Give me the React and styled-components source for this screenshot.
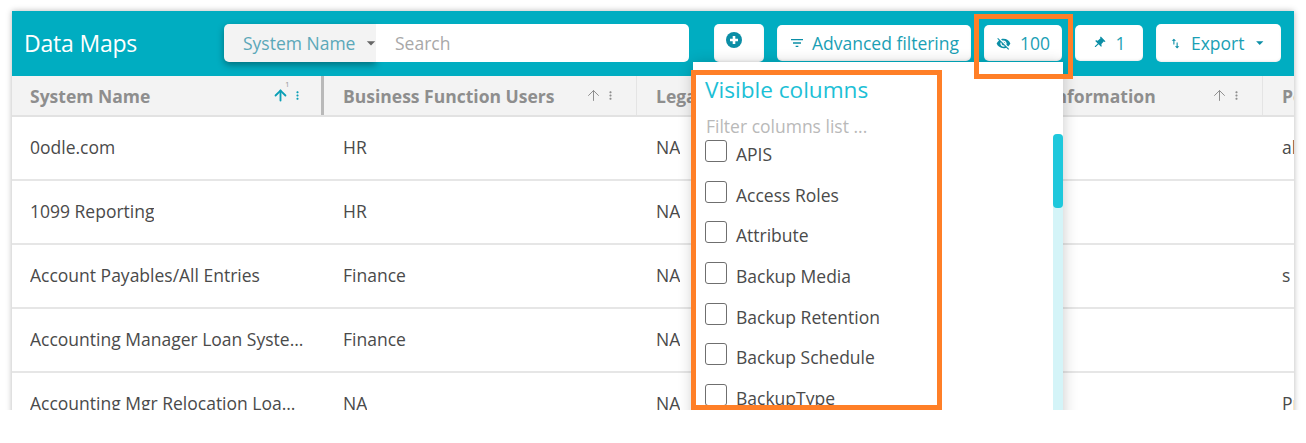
import React from 'react';
import styled, { createGlobalStyle } from 'styled-components';
import { ArrowUp } from 'lucide-react';
import {
  MdArrowDropDown,
  MdFilterList,
  MdMoreVert,
  MdPushPin,
  MdSwapVert,
  MdVisibilityOff,
} from 'react-icons/md';

const GlobalStyle = createGlobalStyle`
  html, body {
    margin: 0;
    padding: 0;
    background: #fff;
    font-family: "Open Sans", "Liberation Sans", sans-serif;
  }
`;

const Page = styled.div`
  position: relative;
  width: 1306px;
  height: 410px;
  padding: 11px 12px 0;
  box-sizing: border-box;
  overflow: hidden;
`;

const Card = styled.div`
  position: relative;
  width: 1282px;
  height: 440px;
  overflow: hidden;
  background: #fff;
  box-shadow: 0 0 6px rgba(0, 0, 0, 0.28);
`;

const Header = styled.header`
  display: flex;
  align-items: flex-start;
  height: 65px;
  padding: 13px 0 0 12px;
  box-sizing: border-box;
  background: #00adc1;
`;

const Title = styled.h1`
  width: 200px;
  margin: 0;
  font-size: 23px;
  line-height: 38px;
  font-weight: 400;
  letter-spacing: -0.2px;
  color: #fff;
`;

const Search = styled.div`
  display: flex;
  width: 465px;
  height: 38px;
  margin-right: 25px;
`;

const SearchScope = styled.div`
  display: flex;
  align-items: center;
  width: 152px;
  padding-left: 19px;
  box-sizing: border-box;
  background: #f3f3f3;
  border-radius: 5px 0 0 5px;
  box-shadow: 0 3px 7px rgba(0, 0, 0, 0.35);
  font-size: 17.5px;
  color: #5ba8b9;
  white-space: nowrap;

  svg {
    flex: none;
    margin-left: 6px;
    color: #666;
    font-size: 20px;
  }
`;

const SearchInput = styled.input`
  flex: 1;
  min-width: 0;
  position: relative;
  border: 0;
  outline: 0;
  padding: 0 0 0 19px;
  background: #fff;
  border-radius: 0 5px 5px 0;
  font: 400 17.5px "Open Sans", sans-serif;

  &::placeholder {
    color: #a8a8a8;
    opacity: 1;
  }
`;

const Toolbar = styled.div`
  display: flex;
  align-items: flex-start;
  gap: 13px;
`;

const ToolButton = styled.button`
  display: flex;
  align-items: center;
  justify-content: ${(p) => (p.$top ? 'flex-start' : 'center')};
  width: ${(p) => p.$width}px;
  height: ${(p) => (p.$tall ? 38 : 36)}px;
  margin-top: ${(p) => (p.$tall ? 0 : 1)}px;
  padding: 0;
  border: 0;
  border-radius: 5px;
  background: #fff;
  box-shadow: inset 0 -1px 2px rgba(0, 0, 0, 0.08);
  font: 400 17.5px "Open Sans", sans-serif;
  color: #1b9fb5;
`;

const ButtonIcon = styled.span`
  display: inline-flex;
  margin-right: ${(p) => p.$gap}px;
  font-size: ${(p) => p.$size}px;
  color: #0b8ea6;
  transform: ${(p) => p.$rotate || 'none'};
`;

const DropCaret = styled(MdArrowDropDown)`
  margin-left: 6px;
  color: #0b8ea6;
`;

const PlusIcon = styled.svg`
  width: 16px;
  height: 16px;
  margin: -6px 0 0 12px;
`;

const TableHead = styled.div`
  display: grid;
  grid-template-columns: 312px repeat(4, 313px);
  height: 41px;
  background: #f3f3f3;
  border-bottom: 2px solid #e2e2e2;
  box-sizing: border-box;
`;

const HeadCell = styled.div`
  display: flex;
  align-items: center;
  justify-content: space-between;
  height: 39px;
  padding: 0 ${(p) => (p.$frozen ? 17 : 19)}px 0 ${(p) => (p.$frozen ? 18 : 19)}px;
  box-sizing: border-box;
  border-right: ${(p) => (p.$frozen ? '3px solid #b9b9b9' : '1px solid #e4e4e4')};
  font-size: 17.5px;
  font-weight: 700;
  color: #8e8e8e;
  white-space: nowrap;
  overflow: hidden;
`;

const SortGroup = styled.div`
  position: relative;
  display: flex;
  align-items: center;
  gap: 2px;
  color: ${(p) => (p.$active ? '#0a9fb6' : '#8e8e8e')};
`;

const Kebab = styled(MdMoreVert)`
  font-size: 13px;
`;

const SortOrder = styled.span`
  position: absolute;
  top: -8px;
  left: 13px;
  font-size: 8px;
  line-height: 10px;
  font-weight: 400;
  color: #9a9a9a;
`;

const Row = styled.div`
  display: grid;
  grid-template-columns: 312px repeat(4, 313px);
  height: 64px;
  box-sizing: border-box;
  border-bottom: 2px solid #e6e6e6;
`;

const Cell = styled.div`
  display: flex;
  align-items: center;
  min-width: 0;
  padding: 0 18px 3px ${(p) => (p.$first ? 18 : 19)}px;
  font-size: 17.5px;
  color: #4a4a4a;
`;

const CellText = styled.span`
  overflow: hidden;
  white-space: nowrap;
  text-overflow: ellipsis;
`;

const Popover = styled.div`
  position: absolute;
  left: 681px;
  top: 51px;
  width: 370px;
  height: 420px;
  display: flex;
  background: #fff;
  box-shadow: 0 2px 14px rgba(0, 0, 0, 0.22);
`;

const PopoverBody = styled.div`
  flex: 1;
  padding: 12px 0 0 12px;
`;

const PopoverTitle = styled.h2`
  margin: 0;
  font-size: 22.6px;
  line-height: 32px;
  font-weight: 400;
  color: #1cc0d6;
`;

const FilterInput = styled.input`
  display: block;
  width: 300px;
  height: 24px;
  margin: 8px 0 2px 1px;
  padding: 0;
  border: 0;
  outline: 0;
  font: 400 17.5px "Open Sans", sans-serif;

  &::placeholder {
    color: #b9b9b9;
    opacity: 1;
  }
`;

const ColumnItem = styled.label`
  display: flex;
  align-items: flex-start;
  gap: 9px;
  height: 40.7px;
  font-size: 17.5px;
  line-height: 26px;
  color: #4a4a4a;
`;

const Checkbox = styled.span`
  flex: none;
  width: 22px;
  height: 22px;
  box-sizing: border-box;
  border: 1px solid #6f6f6f;
  border-radius: 3px;
  background: #fff;
`;

const ColumnName = styled.span`
  margin-top: 1px;
`;

const ScrollTrack = styled.div`
  flex: none;
  width: 10px;
  margin-top: 72px;
  background: #d4f4f8;
  border-radius: 4px 4px 0 0;
`;

const ScrollThumb = styled.div`
  height: 74px;
  background: #1fc8dc;
  border-radius: 4px;
`;

const Highlight = styled.div`
  position: absolute;
  left: ${(p) => p.$left}px;
  top: ${(p) => p.$top}px;
  width: ${(p) => p.$width}px;
  height: ${(p) => p.$height}px;
  box-sizing: border-box;
  border: 5px solid #ff7f27;
  pointer-events: none;
`;

const SortIcons = ({ active, order }) => (
  <SortGroup $active={active}>
    {order && <SortOrder>{order}</SortOrder>}
    <ArrowUp size={17} strokeWidth={active ? 2.6 : 1.4} />
    <Kebab />
  </SortGroup>
);

const headers = ['System Name', 'Business Function Users', 'Legal Entity', 'Personal Information', 'Pe'];

const rows = [
  ['0odle.com', 'HR', 'NA', '', 'al'],
  ['1099 Reporting', 'HR', 'NA', '', ''],
  ['Account Payables/All Entries', 'Finance', 'NA', '', 's'],
  ['Accounting Manager Loan System Records', 'Finance', 'NA', '', ''],
  ['Accounting Mgr Relocation Loan Records', 'NA', 'NA', '', 'Pr'],
];

const columnNames = [
  'APIS',
  'Access Roles',
  'Attribute',
  'Backup Media',
  'Backup Retention',
  'Backup Schedule',
  'BackupType',
];

const App = () => {
  return (
    <Page>
      <GlobalStyle />
      <Card>
        <Header>
          <Title>Data Maps</Title>
          <Search>
            <SearchScope>
              System Name
              <MdArrowDropDown />
            </SearchScope>
            <SearchInput placeholder="Search" />
          </Search>
          <Toolbar>
            <ToolButton $width={50} $tall $top>
              <PlusIcon viewBox="0 0 16 16">
                <circle cx="8" cy="8" r="8" fill="#0b8ea6" />
                <path d="M8 4v8M4 8h8" stroke="#fff" strokeWidth="2.6" />
              </PlusIcon>
            </ToolButton>
            <ToolButton $width={194}>
              <ButtonIcon $size={16} $gap={7}>
                <MdFilterList />
              </ButtonIcon>
              Advanced filtering
            </ToolButton>
            <ToolButton $width={78}>
              <ButtonIcon $size={15} $gap={9}>
                <MdVisibilityOff />
              </ButtonIcon>
              100
            </ToolButton>
            <ToolButton $width={68}>
              <ButtonIcon $size={14} $gap={9} $rotate="rotate(45deg)">
                <MdPushPin />
              </ButtonIcon>
              1
            </ToolButton>
            <ToolButton $width={125} $tall>
              <ButtonIcon $size={13} $gap={9}>
                <MdSwapVert />
              </ButtonIcon>
              Export
              <DropCaret />
            </ToolButton>
          </Toolbar>
        </Header>

        <TableHead>
          {headers.map((name, i) => (
            <HeadCell key={name} $frozen={i === 0}>
              {name}
              {i < 4 && <SortIcons active={i === 0} order={i === 0 ? '1' : null} />}
            </HeadCell>
          ))}
        </TableHead>

        {rows.map((row) => (
          <Row key={row[0]}>
            {row.map((value, i) => (
              <Cell key={i} $first={i === 0}>
                <CellText>{value}</CellText>
              </Cell>
            ))}
          </Row>
        ))}

        <Popover>
          <PopoverBody>
            <PopoverTitle>Visible columns</PopoverTitle>
            <FilterInput placeholder="Filter columns list ..." />
            {columnNames.map((name) => (
              <ColumnItem key={name}>
                <Checkbox />
                <ColumnName>{name}</ColumnName>
              </ColumnItem>
            ))}
          </PopoverBody>
          <ScrollTrack>
            <ScrollThumb />
          </ScrollTrack>
        </Popover>
      </Card>
      <Highlight $left={691} $top={70} $width={251} $height={340} />
      <Highlight $left={974} $top={14} $width={99} $height={65} />
    </Page>
  );
};

export default App;
